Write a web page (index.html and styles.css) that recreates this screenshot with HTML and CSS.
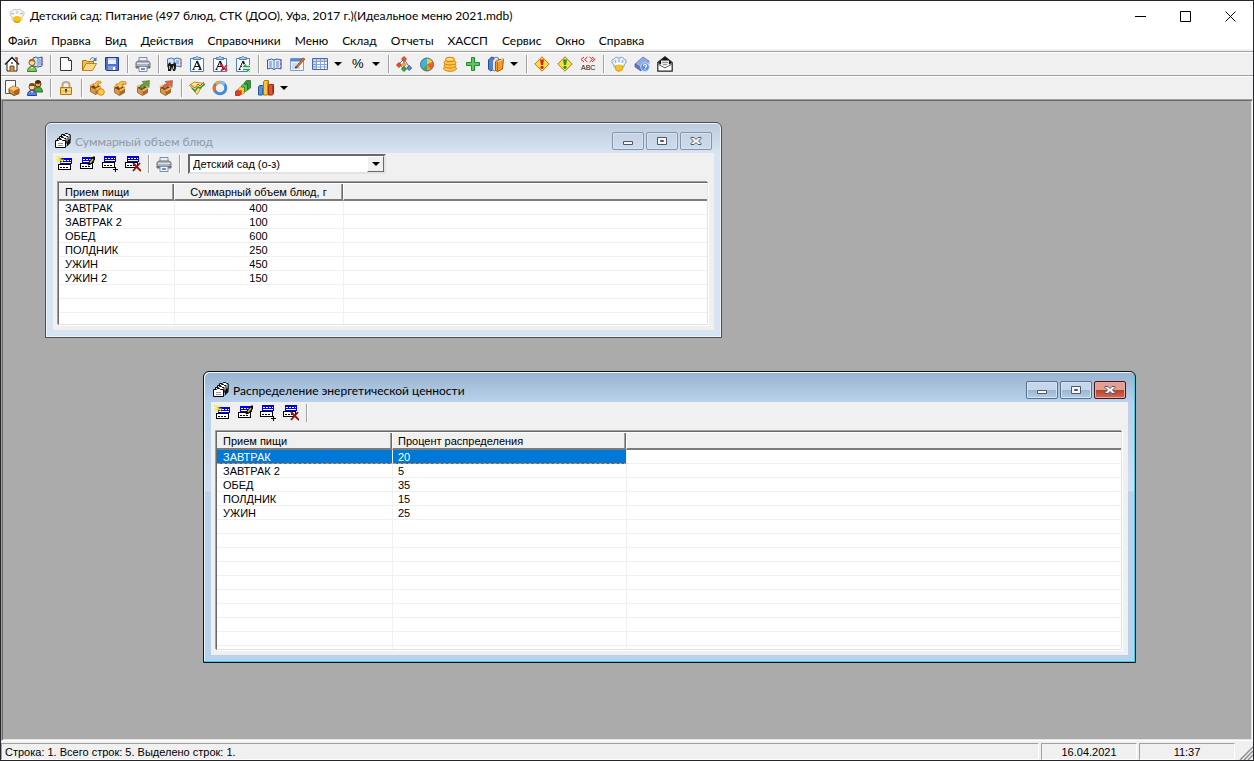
FILE: index.html
```
<!DOCTYPE html>
<html lang="ru">
<head>
<meta charset="utf-8">
<title>Детский сад: Питание</title>
<link rel="stylesheet" href="styles.css">
</head>
<body>
<svg class="sprite" aria-hidden="true">
  <symbol id="chef" viewBox="0 0 16 16"><path d="M3 9 1 7V4l2-1 2-2 3 1 3-1 2 2 2 1v3l-2 2v3H3z" fill="#f2f2f0" stroke="#c9c9c4"/><path d="M5 9 4 5M8 8V3m3 6 1-4M2 6l2-1m8 0 2 1" stroke="#b8b8b4" fill="none"/><circle cx="8" cy="11" r="4" fill="#f5c518"/><path d="M5 13q3 3 6 0" stroke="#c98a00" fill="none"/><path d="M4 8q4-2 8 0" stroke="#fff" stroke-width="2" fill="none"/></symbol>
  <symbol id="chefblue" viewBox="0 0 16 16"><path d="M3 9 1 7V4l2-1 2-2 3 1 3-1 2 2 2 1v3l-2 2v2H3z" fill="#e4ecf6" stroke="#91a8c6"/><path d="M5 8 4 4M8 7V2m3 6 1-4" stroke="#91a8c6" fill="none"/><circle cx="8" cy="11.500" r="3.800" fill="#f8c321" stroke="#e0a010"/><path d="M4 8.500q4-2 8 0" stroke="#fff" stroke-width="2" fill="none"/></symbol>
  <symbol id="home" viewBox="0 0 16 16"><path d="M3 7v8h10V7L8 2z" fill="#fff" stroke="#222"/><path d="M1 8.500 8 1.500l7 7" fill="none" stroke="#222" stroke-width="1.500"/><path d="M11 2h2v4" fill="none" stroke="#a33" stroke-width="1.500"/><path d="M6 15v-5h4v5" fill="#d89030" stroke="#7a4a10"/><path d="M7 6h2v2H7z" fill="#48a"/></symbol>
  <symbol id="userbook" viewBox="0 0 16 16"><path d="M6 2 9 1l2 1 4-1v9l-4 1-5-1z" fill="#cfe2f7" stroke="#2d62a8"/><path d="M11 2v8m1-6h2m-2 2h2m-2 2h2" stroke="#5b8dd0"/><path d="M15 1v9" stroke="#e33" stroke-dasharray="2 1"/><circle cx="5" cy="6.500" r="3" fill="#ffdc9c" stroke="#8a5512"/><path d="M2 6q0-3 3-3t3 3L5 5z" fill="#a06a20"/><path d="M.5 15.500q0-5 4.500-5t4.500 5z" fill="#82c45a" stroke="#35812a"/><path d="m4 11 1 2 1-2z" fill="#fff"/></symbol>
  <symbol id="new" viewBox="0 0 16 16"><path d="M2.500 1.500h8l3 3v10h-11z" fill="#fff" stroke="#333"/><path d="M10.500 1.500v3h3" fill="#ddd" stroke="#333"/></symbol>
  <symbol id="open" viewBox="0 0 16 16"><path d="M1.500 14V4.500h4l1 1h6V8" fill="#f1bd4e" stroke="#a87418"/><path d="M1.500 14.500 5 7.500h10.500l-4 7z" fill="#fbd982" stroke="#b98322"/><path d="M9 4q2-4 5-1" fill="none" stroke="#4b77a6"/><path d="M15.500 1v4h-4z" fill="#4b77a6"/></symbol>
  <symbol id="save" viewBox="0 0 16 16"><path d="M1.500 1.500h13v13h-12l-1-1z" fill="#4f72d8" stroke="#24388a"/><path d="M4 2h8v6H4z" fill="#e9f0ff"/><path d="M4 3h8" stroke="#9ab4ec"/><path d="M4 10h8v4H4z" fill="#8d9bc4"/><path d="M9 11h2v3H9z" fill="#fff"/></symbol>
  <symbol id="print" viewBox="0 0 16 16"><path d="M4 1.500h8V7H4z" fill="#e8f1fb" stroke="#7d8ea6"/><path d="M1 6.500 3 5h10l2 1.500V12H1z" fill="#aeb3bb" stroke="#666c76"/><path d="M2 7.500h12" stroke="#e5e7eb"/><path d="M1 10h14v2H1z" fill="#6f747c"/><path d="M4 10.500h8v5H4z" fill="#f3f8fd" stroke="#7d8ea6"/><path d="M6 12h4v2H6z" fill="#5e94d0"/><path d="M13 8h1v1h-1z" fill="#3b3"/></symbol>
  <symbol id="find" viewBox="0 0 16 16"><path d="m1.500 3 4-1L8 3l3-1 4 1v8l-4-1-3 1-3-1-3.500 1z" fill="#cfe2f7" stroke="#4276b8"/><path d="M8 3v7M10 5h3m-3 2h3" stroke="#5b8dd0"/><path d="M15 3v8" stroke="#e62" stroke-dasharray="2 1"/><path d="m2 8 2-2 1 2h2l2-2 1 2v4l-1 3H7l-1-4-1 4H2z" fill="#1a1a1a"/><path d="M3.500 10v3m4-3v3" stroke="#bbb"/></symbol>
  <symbol id="clip" viewBox="0 0 16 16"><path d="M1.500 2.500h13v13h-13z" fill="#f6faff" stroke="#4f7fbd"/><path d="M4.500 3.500v-2h2l1-1h1l1 1h2v2z" fill="#a9c8ec" stroke="#4f7fbd"/><path d="m4.500 13 3.500-8" fill="none" stroke="#151515"/><path d="m8 5 3.500 8" stroke="#151515" stroke-width="1.800"/><path d="M6 10.500h4M3.500 13.500h2m4 0h3" stroke="#151515"/></symbol>
  <symbol id="clipx" viewBox="0 0 16 16"><use href="#clip"/><path d="m8 8 7 7m0-6-6 6M8 9h2m3 4h2" stroke="#e22030" stroke-width="1.600"/></symbol>
  <symbol id="clipr" viewBox="0 0 16 16"><use href="#clip"/><path d="M15 10.500H9l2-2m-3 5h6l-2 2" fill="none" stroke="#fff" stroke-width="3"/><path d="M15 10.500H9l2-2m-3 5h6l-2 2" fill="none" stroke="#2f9e4a" stroke-width="1.500"/></symbol>
  <symbol id="book" viewBox="0 0 16 16"><path d="m1.500 4 4-1L8 4l3-1 4 1v9l-4-1-3 1.500L5 12l-3.500 1z" fill="#dceafa" stroke="#315f9f"/><path d="M8 4v9M3 6h3M3 8h3m-3 2h3m4-4h3m-3 2h3m-3 2h3" stroke="#5b8dd0"/><path d="M15 3v9" stroke="#d33" stroke-dasharray="2 2"/></symbol>
  <symbol id="edit" viewBox="0 0 16 16"><path d="M1.500 2.500h13v12h-13z" fill="#edf4fc" stroke="#7d9ccb"/><path d="M2 4h12" stroke="#5a86cf" stroke-width="3"/><path d="M3 8h8m-8 2h6m-6 2h8" stroke="#a9c3e6"/><path d="m6 12 8-10 2 1-8 9z" fill="#df7b28" stroke="#7e3d10" stroke-width=".7"/><path d="m6 12 1-2 1 1z" fill="#222"/></symbol>
  <symbol id="grid" viewBox="0 0 16 16"><path d="M.5 2.500h15v11H.5z" fill="#fff" stroke="#446ba5"/><path d="M1 3h14v2H1zM1 5h3v8H1z" fill="#bdd1ec"/><path d="M1 5.500h14M1 8.500h14M1 11h14M4.500 3v10m4-10v10m4-10v10" stroke="#86a3cf"/></symbol>
  <symbol id="tree" viewBox="0 0 16 16"><path d="M8 3 3 8m5-5v10M8 3l6 9M3 8l5 5" fill="none" stroke="#777"/><g stroke-width=".8"><path d="m8 .5 2.500 2.500L8 5.500 5.500 3z" fill="#e7582f" stroke="#a32d12"/><path d="M3 6.500 5.500 9 3 11.500.5 9z" fill="#e84b2d" stroke="#a32d12"/><path d="m8 6.500 2 2-2 2-2-2z" fill="#f2b632" stroke="#a8780f"/><path d="m8 10.500 2.500 2.500L8 15.500 5.500 13z" fill="#3caa3c" stroke="#176517"/><path d="m13.200 9.500 2.500 2.500-2.500 2.500-2.500-2.500z" fill="#4c8ce0" stroke="#244b91"/></g></symbol>
  <symbol id="pie" viewBox="0 0 16 16"><circle cx="8" cy="8.500" r="6.500" fill="#f59a23"/><path d="M8 8.500V2a6.500 6.500 0 0 0-4.500 11z" fill="#41b2de"/><path d="M8 8.500V2a6.500 6.500 0 0 1 6 4z" fill="#e8cf32"/><path d="m8 8.500-4.500 4.500q2 2 4.500 2z" fill="#49a64a"/><circle cx="8" cy="8.500" r="6.500" fill="none" stroke="#41728c"/><path d="m8 8.500 6-2.500q2 5-2 7.500z" fill="#ec5b29"/></symbol>
  <symbol id="coins" viewBox="0 0 16 16"><g fill="#ffc84a" stroke="#d07f14"><ellipse cx="8" cy="12.500" rx="6.500" ry="2.800"/><ellipse cx="8" cy="9.500" rx="6" ry="2.600"/><ellipse cx="8" cy="6.500" rx="6" ry="2.500"/><ellipse cx="8" cy="3.500" rx="4.500" ry="2.200"/></g><path d="M5 3h5" stroke="#ffe9a5"/></symbol>
  <symbol id="plus" viewBox="0 0 16 16"><path d="M6.500 1.500h3v5h5v3h-5v5h-3v-5h-5v-3h5z" fill="#5dc95d" stroke="#1c8a2e"/></symbol>
  <symbol id="books" viewBox="0 0 16 16"><path d="m.5 4 3-3 3 1v11l-4 2-2-2z" fill="#4f7fd6" stroke="#284c92"/><path d="m4.500 5 3-4 3 1v11l-4 2-2-1z" fill="#dde6f2" stroke="#6a84a8"/><path d="m7.500 6 2-2 6-1-1 10-5 2.500-2-1z" fill="#f49b2c" stroke="#a85a0c"/><path d="m9.500 6 6-3" stroke="#ffe0a0"/><path d="M9.500 6v9" stroke="#b96913"/></symbol>
  <symbol id="warn" viewBox="0 0 16 16"><path d="m8 .8 7.200 7.200L8 15.200.8 8z" fill="#ffdc45" stroke="#b07b13"/><path d="M6 3.500h4L9 9H7z" fill="currentColor"/><circle cx="8" cy="11.300" r="1.600" fill="currentColor"/></symbol>
  <symbol id="help" viewBox="0 0 16 16"><path d="m1 8 8-7 6 4-8 7z" fill="#95a8e5" stroke="#5367a8" stroke-width=".7"/><path d="m1 8 6 4v3L1 11z" fill="#6478be" stroke="#46589c" stroke-width=".7"/><path d="m7 12 8-7v3l-8 7z" fill="#e5ebfa" stroke="#6479bd" stroke-width=".7"/><circle cx="11" cy="11" r="4.300" fill="#5e91e6" stroke="#c9daf8"/><path d="M9.500 10q0-1.500 1.500-1.500t1.500 1.300T11 11.500m0 1v1" fill="none" stroke="#fff" stroke-width="1.200"/></symbol>
  <symbol id="mail" viewBox="0 0 16 16"><path d="M.8 6.500 8 .8l7.200 5.700v8.700H.8z" fill="#fff" stroke="#222" stroke-width="1.200"/><path d="M1 7 8 1l7 6-3 1.500V5H4v3.500z" fill="#111"/><path d="M4 4.500h8V8l-4 2.500L4 8z" fill="#e8e8e8"/><path d="M5 6.500h6m-5 2h4" stroke="#999"/><path d="m1 8 7 4 7-4" fill="none" stroke="#555"/></symbol>
  <symbol id="docbox" viewBox="0 0 16 16"><path d="M1.500.5h10v13h-10z" fill="#fff" stroke="#555"/><use href="#box" x="4" y="5" width="12" height="11"/></symbol>
  <symbol id="box" viewBox="0 0 12 11"><path d="M1 3.500 6 1l5 2.500v5L6 10.500l-5-3z" fill="#d88b2e" stroke="#80450b"/><path d="M1 3.500 6 6l5-2.500L6 1z" fill="#f8c76c"/><path d="M6 6v4l5-2V3.500z" fill="#ae621b"/></symbol>
  <symbol id="users" viewBox="0 0 16 16"><circle cx="11" cy="4" r="3" fill="#e8a65c" stroke="#5f3810"/><path d="M8 3q0-3 3-3t3 3l-3 1z" fill="#4c2c10"/><path d="M7 12q0-5 4-5t4.500 5z" fill="#4eaa40" stroke="#236c1f"/><circle cx="5" cy="7" r="3" fill="#ffd69a" stroke="#7d4a12"/><path d="M2 6q0-3 3-3t3 3L5 6z" fill="#7b4616"/><path d="M.5 15.500q0-5 4.500-5t4.500 5z" fill="#5a7fe2" stroke="#2b3f96"/><path d="m4 11 1 2 1-2z" fill="#fff"/></symbol>
  <symbol id="lock" viewBox="0 0 16 16"><path d="M4.500 8V5q0-3 3.500-3t3.500 3v3" fill="none" stroke="#b5a990" stroke-width="2"/><path d="M2.500 7.500h11v7h-11z" fill="#f6c557" stroke="#b47a18"/><path d="M3 9.500h10M3 13h10" stroke="#ffe3a0"/><path d="M7 9h2v2H8.500v2h-1v-2H7z" fill="#27406e"/></symbol>
  <symbol id="crate" viewBox="0 0 16 16"><path d="M2.500 7.500 7 10l5.500-3v5.500l-5 3-5-3z" fill="#d99a4a" stroke="#8b5518" stroke-width=".8"/><path d="m2.500 7.500 4.500-2 5.500 1.500L7 10z" fill="#6a3e0c"/><path d="M7.500 10v5.500l5-3V7z" fill="#a8682a"/><path d="m2.500 7.500-1.500-1 4-2 2 1zm4.500 2.500 1.500 1.500 5-3-1-1.500z" fill="#ecb665"/></symbol>
  <symbol id="cratecoin" viewBox="0 0 16 16"><use href="#crate" x="-1" y="-1"/><path d="M12 1.500Q7 0 6 4H3.500L7 7.500 10 4H8q1-2 4-.500z" fill="#ffc649" stroke="#c0790f" stroke-width=".7"/><circle cx="12" cy="12" r="3.300" fill="#ffc73c" stroke="#db8c12"/></symbol>
  <symbol id="cratein" viewBox="0 0 16 16"><use href="#crate"/><path d="M14 2Q8 0 6.500 4H3.500L8 8.500 12 4.500H9.500q1-2 4.500 0z" fill="#ffc649" stroke="#c0790f" stroke-width=".7"/></symbol>
  <symbol id="crateout" viewBox="0 0 16 16"><use href="#crate"/><path d="M5 8q0-4 4-4.500L7 1.500 14.500.5l-.5 7-2-2q-3 0-4 3.500z" fill="currentColor" stroke="#555" stroke-width=".5"/></symbol>
  <symbol id="check" viewBox="0 0 16 16"><path d="m.5 5 5-3L15 3.500 8 14.500z" fill="#ffe48f" stroke="#c48b1c"/><path d="m2 5 4 3 3-4 2 2 4-4" fill="none" stroke="#d94a20"/><path d="m3 8 3 3 3-4 2 1 5-4" fill="none" stroke="#2f9a3a" stroke-width="1.500"/></symbol>
  <symbol id="ring" viewBox="0 0 16 16"><g fill="none" stroke-width="3"><circle cx="8" cy="8" r="5.800" stroke="#438bd4"/><path d="M4 4a5.800 5.800 0 0 1 8.500.500" stroke="#90bce8"/><path d="M3 5A5.800 5.800 0 0 0 3 11" stroke="#ed6a2a"/><path d="M8 2.200a5.800 5.800 0 0 0-4 1.800" stroke="#f0a832"/></g></symbol>
  <symbol id="bars3d" viewBox="0 0 16 16"><g stroke-width=".7"><path d="m.5 11.500 2-1.500h4v4l-2 1.500h-4z" fill="#e23b26" stroke="#96180d"/><path d="m3.500 8.500 2-1.500h4v6l-3 1.500v-4h-3z" fill="#ffcb35" stroke="#b6830f"/><path d="m6.500 5.500 2-1.500h4v6l-3 2V7h-3z" fill="#5cc254" stroke="#237b24"/><path d="m9.500 2.500 2-2h4v7.500l-3 2V4h-3z" fill="#37973a" stroke="#1b6223"/></g></symbol>
  <symbol id="chart" viewBox="0 0 16 16"><path d="m.5 7 1-1.500h4v8l-1 1.500h-4z" fill="#4a95dc" stroke="#245a9c"/><path d="m5.500 2 1-1.500h4v13l-1 1.500h-4z" fill="#fcc633" stroke="#af7509"/><path d="m10.500 6 1-1.500h4v9l-1 1.500h-4z" fill="#e9502a" stroke="#982b0e"/><path d="M4.500 8v6m5-12v12m5-8v7" stroke="#0004"/></symbol>
  <symbol id="table" viewBox="0 0 16 16"><g shape-rendering="crispEdges"><path d="M3 2h12v6H3z" fill="#0000f0"/><path d="M4 4h10v1H4zm0 2h10v1H4z" fill="#fff"/><path d="M6 4h1v1H6zm3 0h1v1H9zm3 0h1v1h-1z" fill="#0000f0"/><path d="M1 8h13v6H1z"/><path d="M2 9h11v4H2z" fill="#fff"/><path d="M3 11h2v1H3zm3 0h2v1H6zm3 0h2v1H9z"/></g></symbol>
  <symbol id="rownew" viewBox="0 0 16 16"><use href="#table" x="1"/><path d="m0 0 8 7M3-1l1 8M8-1 1 7M0 4h8" stroke="#f5eb00"/></symbol>
  <symbol id="rowedit" viewBox="0 0 16 16"><use href="#table" y="-1"/><path d="m9 9 1-3 4-5h2v2l-4 5z" stroke="#000"/><path d="m11 7 3-4" stroke="#d8c800" stroke-width="1.500"/></symbol>
  <symbol id="rowadd" viewBox="0 0 16 16"><use href="#table" x="-1" y="-2"/><path d="M11 13.500h5M13.500 11v5" stroke="#000"/></symbol>
  <symbol id="rowdel" viewBox="0 0 16 16"><use href="#table" x="-1" y="-2"/><path d="m8 7 8 8m-1-8-7 8" stroke="#970909" stroke-width="1.800"/></symbol>
  <symbol id="cards" viewBox="0 0 16 16"><path d="m13 3 2.500-1v8l-4 4z" fill="#111"/><g fill="#fff" stroke="#000"><path d="M6.500 7V1.500h3l1-1h2l1 1h1.500V7z"/><path d="M4.500 9V3.500h3l1-1h2l1 1h1.500V9z"/><path d="M2.500 11V5.500h3l1-1h2l1 1h1.500V11z"/><path d="M.5 14.500v-7h3l1-1h2l1 1h3v7z"/></g><path d="M3 10.500h5M3 12.500h5" stroke="#999"/></symbol>
  <symbol id="bmin" viewBox="0 0 12 10"><path d="M1.500 5.500h9v3h-9z" fill="#f7f7f7" stroke="#515766"/></symbol>
  <symbol id="bmax" viewBox="0 0 12 10"><path d="M1.500 1.500h9v7h-9zM4.500 4.500h3v1h-3z" fill="#f7f7f7" stroke="#515766"/></symbol>
  <symbol id="bclose" viewBox="0 0 12 10"><path d="M1 1.500h3l2 2 2-2h3v1L8.500 5l2.500 2.500v1H8l-2-2-2 2H1v-1L3.500 5 1 2.500z" fill="#f7f7f7" stroke="#515766"/></symbol>
</svg>

<div class="app">
  <header class="titlebar">
    <svg class="icon"><use href="#chef"/></svg>
    <h1 class="app-title">Детский сад: Питание (497 блюд, СТК (ДОО), Уфа, 2017 г.)(Идеальное меню 2021.mdb)</h1>
    <div class="sysbuttons">
      <button class="sys" aria-label="Свернуть"><svg viewBox="0 0 11 11"><path d="M0 5.500h11"/></svg></button>
      <button class="sys" aria-label="Развернуть"><svg viewBox="0 0 11 11"><path d="M.5.5h10v10H.5z"/></svg></button>
      <button class="sys" aria-label="Закрыть"><svg viewBox="0 0 11 11"><path d="m.5.5 10 10m0-10-10 10"/></svg></button>
    </div>
  </header>
  <nav class="menubar">
    <button>Файл</button><button>Правка</button><button>Вид</button><button>Действия</button><button>Справочники</button><button>Меню</button><button>Склад</button><button>Отчеты</button><button>ХАССП</button><button>Сервис</button><button>Окно</button><button>Справка</button>
  </nav>
  <div class="toolbar" role="toolbar">
    <button class="tool" aria-label="Главная"><svg class="icon"><use href="#home"/></svg></button>
    <button class="tool" aria-label="Справочник персон"><svg class="icon"><use href="#userbook"/></svg></button>
    <span class="sep"></span>
    <button class="tool" aria-label="Создать"><svg class="icon"><use href="#new"/></svg></button>
    <button class="tool" aria-label="Открыть"><svg class="icon"><use href="#open"/></svg></button>
    <button class="tool" aria-label="Сохранить"><svg class="icon"><use href="#save"/></svg></button>
    <span class="sep"></span>
    <button class="tool" aria-label="Печать"><svg class="icon"><use href="#print"/></svg></button>
    <span class="sep"></span>
    <button class="tool" aria-label="Найти"><svg class="icon"><use href="#find"/></svg></button>
    <button class="tool" aria-label="Фильтр"><svg class="icon"><use href="#clip"/></svg></button>
    <button class="tool" aria-label="Снять фильтр"><svg class="icon"><use href="#clipx"/></svg></button>
    <button class="tool" aria-label="Обновить фильтр"><svg class="icon"><use href="#clipr"/></svg></button>
    <span class="sep"></span>
    <button class="tool" aria-label="Книга"><svg class="icon"><use href="#book"/></svg></button>
    <button class="tool" aria-label="Изменить"><svg class="icon"><use href="#edit"/></svg></button>
    <button class="tool" aria-label="Таблица"><svg class="icon"><use href="#grid"/></svg></button>
    <button class="drop" aria-label="Варианты таблицы"></button>
    <button class="tool percent">%</button>
    <button class="drop" aria-label="Варианты процентов"></button>
    <span class="sep"></span>
    <button class="tool" aria-label="Структура"><svg class="icon"><use href="#tree"/></svg></button>
    <button class="tool" aria-label="Диаграмма"><svg class="icon"><use href="#pie"/></svg></button>
    <button class="tool" aria-label="Стоимость"><svg class="icon"><use href="#coins"/></svg></button>
    <button class="tool" aria-label="Добавить"><svg class="icon"><use href="#plus"/></svg></button>
    <button class="tool" aria-label="Книги"><svg class="icon"><use href="#books"/></svg></button>
    <button class="drop" aria-label="Варианты книг"></button>
    <span class="sep"></span>
    <button class="tool red" aria-label="Ошибки"><svg class="icon"><use href="#warn"/></svg></button>
    <button class="tool green" aria-label="Предупреждения"><svg class="icon"><use href="#warn"/></svg></button>
    <button class="tool" aria-label="Замена текста"><svg class="icon" viewBox="0 0 16 16"><path class="marks" d="M4 1 1 3.500 4 6m3.500-5-3 2.500 3 2.500m2-5 3 2.500-3 2.500M12 1l3 2.500L12 6"/><text class="abc" x="1" y="14">ABC</text></svg></button>
    <span class="sep"></span>
    <button class="tool" aria-label="О программе"><svg class="icon"><use href="#chefblue"/></svg></button>
    <button class="tool" aria-label="Помощь"><svg class="icon"><use href="#help"/></svg></button>
    <button class="tool" aria-label="Почта"><svg class="icon"><use href="#mail"/></svg></button>
  </div>
  <div class="toolbar" role="toolbar">
    <button class="tool" aria-label="Продукты"><svg class="icon"><use href="#docbox"/></svg></button>
    <button class="tool" aria-label="Люди"><svg class="icon"><use href="#users"/></svg></button>
    <span class="sep"></span>
    <button class="tool" aria-label="Блокировка"><svg class="icon"><use href="#lock"/></svg></button>
    <span class="sep"></span>
    <button class="tool" aria-label="Закупка"><svg class="icon"><use href="#cratecoin"/></svg></button>
    <button class="tool" aria-label="Приход"><svg class="icon"><use href="#cratein"/></svg></button>
    <button class="tool outgreen" aria-label="Расход"><svg class="icon"><use href="#crateout"/></svg></button>
    <button class="tool outred" aria-label="Списание"><svg class="icon"><use href="#crateout"/></svg></button>
    <span class="sep"></span>
    <button class="tool" aria-label="График"><svg class="icon"><use href="#check"/></svg></button>
    <button class="tool" aria-label="Кольцо"><svg class="icon"><use href="#ring"/></svg></button>
    <button class="tool" aria-label="Рост"><svg class="icon"><use href="#bars3d"/></svg></button>
    <button class="tool" aria-label="Гистограмма"><svg class="icon"><use href="#chart"/></svg></button>
    <button class="drop" aria-label="Варианты гистограммы"></button>
  </div>

  <main class="desktop">
    <section class="window volume">
      <header class="caption">
        <svg class="icon"><use href="#cards"/></svg>
        <h2 class="caption-text">Суммарный объем блюд</h2>
        <button class="cap" aria-label="Свернуть"><svg><use href="#bmin"/></svg></button>
        <button class="cap" aria-label="Развернуть"><svg><use href="#bmax"/></svg></button>
        <button class="cap" aria-label="Закрыть"><svg><use href="#bclose"/></svg></button>
      </header>
      <div class="client">
        <div class="tools">
          <button class="tool" aria-label="Новая запись"><svg class="icon"><use href="#rownew"/></svg></button>
          <button class="tool" aria-label="Изменить запись"><svg class="icon"><use href="#rowedit"/></svg></button>
          <button class="tool" aria-label="Добавить запись"><svg class="icon"><use href="#rowadd"/></svg></button>
          <button class="tool" aria-label="Удалить запись"><svg class="icon"><use href="#rowdel"/></svg></button>
          <span class="sep"></span>
          <button class="tool" aria-label="Печать"><svg class="icon"><use href="#print"/></svg></button>
          <span class="sep"></span>
          <div class="combo">
            <select aria-label="Тип учреждения"><option>Детский сад (о-з)</option></select>
            <span class="combo-arrow"></span>
          </div>
        </div>
        <table class="list">
          <colgroup><col class="c-meal"><col class="c-volume"><col></colgroup>
          <thead><tr><th>Прием пищи</th><th class="mid">Суммарный объем блюд, г</th><th></th></tr></thead>
          <tbody>
            <tr><td>ЗАВТРАК</td><td class="mid">400</td><td></td></tr>
            <tr><td>ЗАВТРАК 2</td><td class="mid">100</td><td></td></tr>
            <tr><td>ОБЕД</td><td class="mid">600</td><td></td></tr>
            <tr><td>ПОЛДНИК</td><td class="mid">250</td><td></td></tr>
            <tr><td>УЖИН</td><td class="mid">450</td><td></td></tr>
            <tr><td>УЖИН 2</td><td class="mid">150</td><td></td></tr>
            <tr><td></td><td></td><td></td></tr>
            <tr><td></td><td></td><td></td></tr>
            <tr class="rest"><td></td><td></td><td></td></tr>
          </tbody>
        </table>
      </div>
    </section>

    <section class="window energy active">
      <header class="caption">
        <svg class="icon"><use href="#cards"/></svg>
        <h2 class="caption-text">Распределение энергетической ценности</h2>
        <button class="cap" aria-label="Свернуть"><svg><use href="#bmin"/></svg></button>
        <button class="cap" aria-label="Развернуть"><svg><use href="#bmax"/></svg></button>
        <button class="cap close" aria-label="Закрыть"><svg><use href="#bclose"/></svg></button>
      </header>
      <div class="client">
        <div class="tools">
          <button class="tool" aria-label="Новая запись"><svg class="icon"><use href="#rownew"/></svg></button>
          <button class="tool" aria-label="Изменить запись"><svg class="icon"><use href="#rowedit"/></svg></button>
          <button class="tool" aria-label="Добавить запись"><svg class="icon"><use href="#rowadd"/></svg></button>
          <button class="tool" aria-label="Удалить запись"><svg class="icon"><use href="#rowdel"/></svg></button>
          <span class="sep"></span>
        </div>
        <table class="list">
          <colgroup><col class="e-meal"><col class="e-percent"><col></colgroup>
          <thead><tr><th>Прием пищи</th><th>Процент распределения</th><th></th></tr></thead>
          <tbody>
            <tr class="selected"><td>ЗАВТРАК</td><td>20</td><td></td></tr>
            <tr><td>ЗАВТРАК 2</td><td>5</td><td></td></tr>
            <tr><td>ОБЕД</td><td>35</td><td></td></tr>
            <tr><td>ПОЛДНИК</td><td>15</td><td></td></tr>
            <tr><td>УЖИН</td><td>25</td><td></td></tr>
            <tr><td></td><td></td><td></td></tr>
            <tr><td></td><td></td><td></td></tr>
            <tr><td></td><td></td><td></td></tr>
            <tr><td></td><td></td><td></td></tr>
            <tr><td></td><td></td><td></td></tr>
            <tr><td></td><td></td><td></td></tr>
            <tr><td></td><td></td><td></td></tr>
            <tr><td></td><td></td><td></td></tr>
            <tr><td></td><td></td><td></td></tr>
            <tr class="rest"><td></td><td></td><td></td></tr>
          </tbody>
        </table>
      </div>
    </section>
  </main>

  <footer class="statusbar">
    <div class="pane grow">Строка: 1. Всего строк: 5. Выделено строк: 1.</div>
    <div class="pane">16.04.2021</div>
    <div class="pane">11:37</div>
    <svg class="grip" viewBox="0 0 14 14"><path d="M1 14 14 1M5 14l9-9M9 14l5-5" stroke="#8f8f8f" stroke-width="1.500"/></svg>
  </footer>
</div>
</body>
</html>
```
FILE: styles.css
```
* { box-sizing: border-box; }

body {
  margin: 0;
  font: 11px/14px "Liberation Sans", Arial, sans-serif;
  color: #000;
}

button {
  margin: 0;
  padding: 0;
  border: 0;
  background: none;
  font: inherit;
  color: inherit;
}

h1, h2 { margin: 0; font-weight: normal; }

.sprite { position: absolute; width: 0; height: 0; }
.icon { display: block; flex: none; width: 16px; height: 16px; overflow: visible; }

.app {
  display: flex;
  flex-direction: column;
  height: 100vh;
  border: 1px solid #26262a;
  background: #f0f0f0;
}

/* Main title bar and menu */
.titlebar {
  display: flex;
  align-items: center;
  flex: none;
  height: 30px;
  padding-left: 8px;
  background: #fff;
}
.app-title {
  flex: 1;
  margin-left: 5px;
  font: 12px/16px Lato, "Noto Sans", sans-serif;
  white-space: nowrap;
}
.sysbuttons { display: flex; }
.sys {
  display: flex;
  align-items: center;
  justify-content: center;
  width: 45px;
  height: 28px;
}
.sys svg { width: 11px; height: 11px; fill: none; stroke: #000; }

.menubar {
  display: flex;
  flex: none;
  height: 20px;
  background: linear-gradient(#fff 18px, #f0f0f0 18px);
  font: 12px/20px Lato, "Noto Sans", sans-serif;
}
.menubar button { padding: 0 7px; }

/* Toolbars */
.toolbar {
  display: flex;
  align-items: center;
  flex: none;
  height: 24px;
  border-top: 1px solid #a0a0a0;
  box-shadow: inset 0 1px #fff;
}
.tool {
  display: flex;
  align-items: center;
  flex: none;
  width: 23px;
  height: 22px;
  padding-left: 3px;
}
.percent { padding-left: 5px; font: 13px/22px "Liberation Sans", Arial, sans-serif; }
.abc { font: 7px "Liberation Sans", Arial, sans-serif; fill: #111; }
.marks { fill: none; stroke: #d9252d; }
.sep {
  flex: none;
  width: 2px;
  height: 18px;
  margin: 0 3px;
  background: linear-gradient(90deg, #a0a0a0 1px, #fff 1px);
}
.drop {
  display: flex;
  justify-content: center;
  width: 15px;
  padding-right: 3px;
}
.drop::before, .combo-arrow::before {
  content: "";
  border: 4px solid transparent;
  border-top-color: #000;
  border-bottom: 0;
}
.red { color: #d92020; }
.green { color: #1e9633; }
.outgreen { color: #65a52e; }
.outred { color: #f0613c; }

/* MDI workspace */
.desktop {
  position: relative;
  flex: 1;
  min-height: 0;
  overflow: hidden;
  border: 1px solid;
  border-color: #a0a0a0 #fff #fff #a0a0a0;
  background: #ababab;
  box-shadow: inset 1px 1px #696969, inset -1px -1px #e3e3e3;
}

.window {
  position: absolute;
  padding: 1px 7px 7px;
  border: 1px solid #4b4e53;
  border-radius: 6px 6px 0 0;
  background: linear-gradient(#bccbdc, #d7e4f2 30px);
  box-shadow: inset 0 0 0 1px #eef4fa;
}
.volume { left: 43px; top: 22px; width: 677px; }
.energy { left: 201px; top: 271px; width: 933px; }
.window.active {
  border-color: #101418;
  background: linear-gradient(#98b3d0, #b9d1ea 30px, #cfdff1 119px, #b9d1ea 120px);
  box-shadow: inset -1px -1px #35d0ec, inset 1px 1px #eaf6ff;
}

.caption {
  display: flex;
  align-items: center;
  height: 29px;
  gap: 2px;
  padding: 4px 2px 0;
}
.caption-text {
  flex: 1;
  margin-left: 2px;
  padding-top: 2px;
  font: 12px/16px Lato, "Noto Sans", sans-serif;
  color: #929aa4;
  white-space: nowrap;
}
.active .caption-text { color: #000; }
.cap {
  display: flex;
  align-items: center;
  justify-content: center;
  width: 32px;
  height: 18px;
  border: 1px solid #8693af;
  border-radius: 2px;
  background: linear-gradient(#c4d2e2, #cddbea);
  box-shadow: inset 0 0 0 1px #d7e3f0;
}
.cap svg { width: 12px; height: 10px; }
.active .cap {
  border-color: #59708f;
  background: linear-gradient(#c3d6ea 8px, #98b4d1 8px, #b6cee7);
  box-shadow: inset 0 0 0 1px #d4e4f4;
}
.active .close {
  border-color: #4b1520;
  background: linear-gradient(#e3a090 8px, #b5402a 8px, #cf6d58);
  box-shadow: inset 0 0 0 1px #e8aa9c;
}

.client { padding: 0 6px 5px 5px; background: #f0f0f0; }
.tools {
  display: flex;
  align-items: center;
  height: 22px;
  margin: 0 0 7px -5px;
}

.combo {
  position: relative;
  width: 198px;
  margin-left: 4px;
}
.combo select {
  display: block;
  width: 100%;
  height: 20px;
  padding: 0 20px 0 3px;
  border: 2px solid;
  border-color: #696969 #e3e3e3 #e3e3e3 #696969;
  border-radius: 0;
  background: #fff;
  color: #000;
  font: inherit;
  appearance: none;
}
.combo-arrow {
  position: absolute;
  top: 2px;
  right: 2px;
  display: flex;
  align-items: center;
  justify-content: center;
  width: 17px;
  height: 16px;
  border: 1px solid;
  border-color: #fff #696969 #696969 #fff;
  background: #f0f0f0;
  pointer-events: none;
}

/* List views */
.list {
  width: 100%;
  table-layout: fixed;
  border-collapse: separate;
  border-spacing: 0;
  border: 1px solid;
  border-color: #696969 #e3e3e3 #e3e3e3 #696969;
  background: #fff;
  box-shadow: -1px -1px #a0a0a0, 1px 1px #fff;
}
.c-meal { width: 116px; }
.c-volume { width: 169px; }
.e-meal { width: 176px; }
.e-percent { width: 234px; }

th, td { text-align: left; font-weight: normal; white-space: nowrap; }
th {
  height: 18px;
  padding: 2px 6px 0;
  line-height: 14px;
  border-right: 1px solid #fff;
  border-bottom: 2px solid #7c7c7c;
  background: #f0f0f0;
  box-shadow: inset 0 1px #fff, inset -1px 0 #696969, inset -2px 0 #a0a0a0;
}
th:last-child { border-right: 0; box-shadow: inset 0 1px #fff; }
td {
  height: 14px;
  padding: 2px 6px 0;
  line-height: 11px;
  border-right: 1px solid #f0f0f0;
  border-bottom: 1px solid #f0f0f0;
}
th:nth-child(2), td:nth-child(2) { padding-left: 5px; }
td:last-child { border-right: 0; }
.mid { text-align: center; }
.list .rest td { padding: 0; line-height: 0; border-bottom: 0; }
.volume .rest td { height: 11px; }
.energy .rest td { height: 3px; }
.selected td:not(:last-child) {
  border-bottom: 1px dashed #ff8728;
  background: #0078d7;
  color: #fff;
}

/* Status bar */
.statusbar {
  display: flex;
  flex: none;
  gap: 2px;
  height: 19px;
  padding: 2px 0 0;
}
.pane {
  width: 96px;
  padding: 1px 3px 0;
  border: 1px solid;
  border-color: #a0a0a0 #fff #fff #a0a0a0;
  line-height: 14px;
  text-align: center;
  white-space: nowrap;
}
.grow { flex: 1; text-align: left; }
.grip { align-self: flex-end; width: 14px; height: 14px; margin-left: 2px; }
```
